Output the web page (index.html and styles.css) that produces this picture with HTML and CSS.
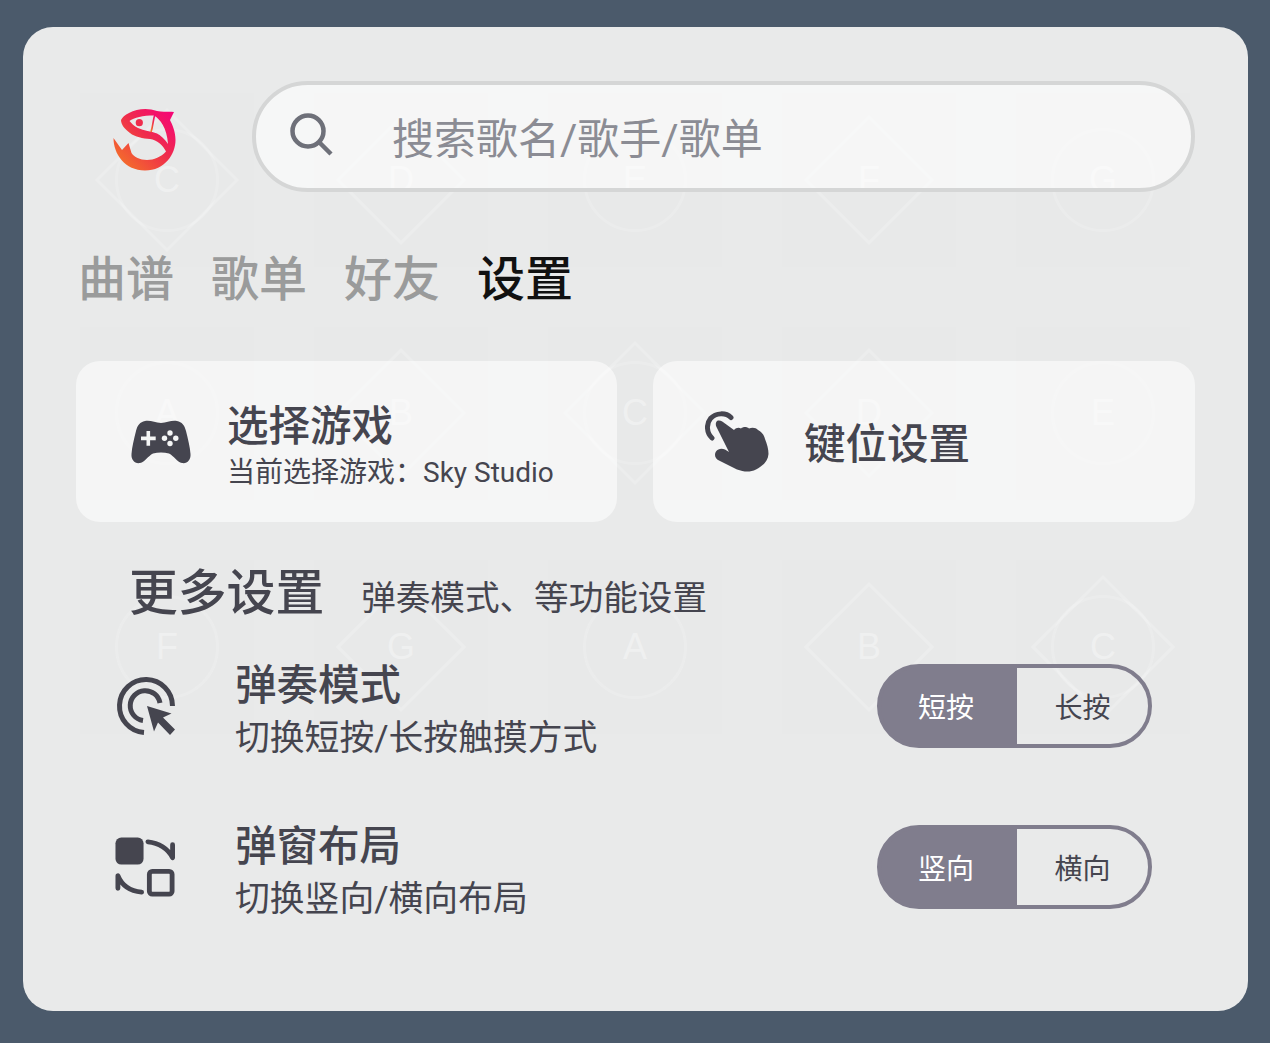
FILE: index.html
```html
<!DOCTYPE html>
<html lang="zh-CN">
<head>
    <meta charset="UTF-8">
    <meta name="viewport" content="width=device-width, initial-scale=1.0">
    <title>设置</title>
    <link rel="stylesheet" href="styles.css">
</head>
<body>
    <div class="panel">
        <!-- Faint keyboard behind the content -->
        <div class="ghost-keys">
            <div class="key both">C</div>
            <div class="key diamond">D</div>
            <div class="key circle">E</div>
            <div class="key diamond">F</div>
            <div class="key circle">G</div>
            <div class="key circle">A</div>
            <div class="key diamond">B</div>
            <div class="key both">C</div>
            <div class="key diamond">D</div>
            <div class="key circle">E</div>
            <div class="key circle">F</div>
            <div class="key diamond">G</div>
            <div class="key circle">A</div>
            <div class="key diamond">B</div>
            <div class="key both">C</div>
        </div>

        <div class="content">
            <!-- Header -->
            <div class="header">
                <svg class="logo" viewBox="0 0 64 64">
                    <defs>
                        <linearGradient id="fish" x1="0" y1="1" x2="1" y2="0">
                            <stop offset="0.1" stop-color="#f4702a"/>
                            <stop offset="0.55" stop-color="#ef2c4c"/>
                            <stop offset="1" stop-color="#f6007c"/>
                        </linearGradient>
                    </defs>
                    <path fill="url(#fish)" fill-rule="evenodd" d="M61 4C55 3 50 4.500 44 3C35 -0.500 24 0.500 16 5C12 7 9 9.500 8 12C8 17 12 21 17 25C22 29 30 30.500 37 31C44 32 50 37 53 43.500C48 49 41 52 34 52C27 52 21 49 18.500 45L15.500 35L9 42L0.500 30C0.500 46 12 62.500 32 62.500C52 62.500 62.500 46 62.500 32C62.500 23 59 16 57 12ZM16.500 13C21 9.500 30 7.500 41 7.500C47 11 54 20 55 36C52 31 47 27 44 25.500C38 23 31 23 25 20C21 18 18.500 15.500 16.500 13Z"/>
                    <path fill="none" stroke="url(#fish)" stroke-width="1.600" d="M42 6C40 12 40 18 38 24"/>
                    <circle cx="26.300" cy="14.700" r="3.600" fill="#ef2c4c"/>
                </svg>
                <div class="search-bar">
                    <svg class="search-icon" viewBox="0 0 44 44" fill="none" stroke="currentColor" stroke-width="4.500">
                        <circle cx="18" cy="18" r="15.500"/>
                        <path d="m29 29 12 12"/>
                    </svg>
                    <span class="search-text">搜索歌名/歌手/歌单</span>
                </div>
            </div>

            <!-- Tabs -->
            <nav class="tabs">
                <a href="#" class="tab">曲谱</a>
                <a href="#" class="tab">歌单</a>
                <a href="#" class="tab">好友</a>
                <a href="#" class="tab active">设置</a>
            </nav>

            <!-- Cards -->
            <div class="cards">
                <div class="card">
                    <svg class="card-icon game-icon" viewBox="0 0 60 44">
                        <path class="icon-fill" d="M14 1C20 0 24 3 30 3C36 3 40 0 46 1C51 2 53.500 5 55 11C57 19 59 27 59.500 34C60 40 56 44 51 43C46 42 43 36 38 33.500C33 32 27 32 22 33.500C17 36 14 42 9 43C4 44 0 40 0.500 34C1 27 3 19 5 11C6.500 5 9 2 14 1Z"/>
                        <path class="icon-cut" d="M15.500 11h3.600v5.600h5.600v3.600h-5.600v5.600h-3.600v-5.600H10v-3.600h5.500z"/>
                        <circle class="icon-cut" cx="39" cy="13" r="2.700"/>
                        <circle class="icon-cut" cx="33.500" cy="18.300" r="2.700"/>
                        <circle class="icon-cut" cx="44.800" cy="18.300" r="2.700"/>
                        <circle class="icon-cut" cx="39" cy="23.500" r="2.700"/>
                    </svg>
                    <div class="card-text">
                        <div class="card-title">选择游戏</div>
                        <div class="card-sub">当前选择游戏：Sky Studio</div>
                    </div>
                </div>
                <div class="card">
                    <svg class="card-icon hand-icon" viewBox="0 0 64 62">
                        <path class="icon-line" d="M26 6.500C21 1.500 11 1.500 5.500 7.500C1 13 1.500 22 7 27"/>
                        <path class="icon-fill" d="M12 10C15 8.500 18 11 20 12.500L29 19C31 16.500 34 16 36 17.500C38 15.500 42 15.500 44 17.500C47 16 51 16.500 53 19C57 21 59 24 60 28C62 33 63.500 38 63.500 43C63 50 58 55 51 58.500C45 61.500 39 61 32 58.500L14 49.500C10 47.500 9 43.500 11 40.500C13 37.500 17 37 20 38.500L24 41L19 31L11.500 16C10.500 14 10.500 11.500 12 10Z"/>
                    </svg>
                    <div class="card-title single">键位设置</div>
                </div>
            </div>

            <!-- More settings -->
            <div class="more-head">
                <h2 class="more-title">更多设置</h2>
                <span class="more-sub">弹奏模式、等功能设置</span>
            </div>

            <div class="setting-row">
                <svg class="setting-icon" viewBox="0 0 60 60">
                    <path class="icon-line butt" d="M56.500 30A26.500 26.500 0 1 0 28 56.500"/>
                    <path class="icon-line butt" d="M44 27A15 15 0 1 0 27 44.500"/>
                    <path class="icon-fill" d="M31 30L55.500 37.500L47 41.500L59 53.500L54 59L42 46.500L38 55.500Z"/>
                </svg>
                <div class="setting-text">
                    <div class="setting-title">弹奏模式</div>
                    <div class="setting-sub">切换短按/长按触摸方式</div>
                </div>
                <div class="toggle">
                    <span class="toggle-item on">短按</span>
                    <span class="toggle-item">长按</span>
                </div>
            </div>

            <div class="setting-row">
                <svg class="setting-icon wide" viewBox="0 0 62 62">
                    <rect class="icon-fill" x="0.500" y="0.500" width="29" height="28" rx="6"/>
                    <rect class="icon-line" x="35.500" y="35.500" width="23.500" height="23.500" rx="3"/>
                    <path class="icon-line" d="M34 5C45 6 55 12 59.500 21.500V8"/>
                    <path class="icon-line" d="M27.500 57C16 56 7 50 3 40V53"/>
                </svg>
                <div class="setting-text">
                    <div class="setting-title">弹窗布局</div>
                    <div class="setting-sub">切换竖向/横向布局</div>
                </div>
                <div class="toggle">
                    <span class="toggle-item on">竖向</span>
                    <span class="toggle-item">横向</span>
                </div>
            </div>
        </div>
    </div>
</body>
</html>
```

FILE: styles.css
```css
* {
    margin: 0;
    padding: 0;
    box-sizing: border-box;
}

body {
    font-family: Roboto, "Noto Sans CJK SC", sans-serif;
    background-color: #4b5a6b;
    color: #45454f;
    padding: 27px 22px 32px 23px;
}

.panel {
    position: relative;
    height: 984px;
    background: #e9eaea;
    border-radius: 30px;
    overflow: hidden;
}

/* Ghost keys */
.ghost-keys {
    position: absolute;
    left: 27px;
    top: 36px;
    display: grid;
    grid-template-columns: repeat(5, 234px);
    grid-auto-rows: 233.500px;
}

.key {
    position: relative;
    display: flex;
    align-items: center;
    justify-content: center;
    padding: 30px;
    background: rgba(0,0,0,0.004) content-box;
    font-family: "Liberation Sans", sans-serif;
    font-size: 36px;
    color: rgba(255,255,255,0.35);
}

.key::before,
.key::after {
    content: '';
    position: absolute;
    left: 50%;
    top: 50%;
    box-sizing: border-box;
}

.diamond::before,
.both::before {
    width: 92px;
    height: 92px;
    margin: -46px 0 0 -46px;
    border: 3px solid rgba(255,255,255,0.2);
    transform: rotate(45deg);
}

.both::before {
    width: 102px;
    height: 102px;
    margin: -51px 0 0 -51px;
}

.circle::after,
.both::after {
    width: 104px;
    height: 104px;
    margin: -52px 0 0 -52px;
    border: 3px solid rgba(255,255,255,0.16);
    border-radius: 50%;
}

/* Content */
.content {
    position: relative;
    padding: 54px 53px 0;
}

.header {
    display: flex;
    align-items: center;
}

.logo {
    width: 64px;
    height: 64px;
    margin: 7px 75px 0 37px;
    flex-shrink: 0;
}

.search-bar {
    flex: 1;
    height: 111px;
    display: flex;
    align-items: center;
    padding-left: 34px;
    background: rgba(255,255,255,0.6);
    border: 4px solid #d5d6d6;
    border-radius: 56px;
}

.search-icon {
    width: 44px;
    height: 44px;
    color: #6e7079;
    margin: 0 58px 4px 0;
}

.search-text {
    font-size: 42px;
    color: #8b8c94;
    line-height: 1;
    margin-top: 6px;
}

.tabs {
    display: flex;
    gap: 37px;
    margin-top: 55px;
    padding-left: 2px;
}

.tab {
    font-size: 48px;
    font-weight: 500;
    line-height: 66px;
    color: #9a9b9b;
    text-decoration: none;
}

.tab.active {
    color: #111;
}

.cards {
    display: grid;
    grid-template-columns: 541px 542px;
    gap: 36px;
    margin-top: 48px;
}

.card {
    height: 161px;
    display: flex;
    align-items: center;
    background: rgba(255,255,255,0.55);
    border-radius: 24px;
}

.card-icon {
    flex-shrink: 0;
}

.game-icon {
    width: 60px;
    height: 44px;
    margin: 0 36px 0 55px;
}

.hand-icon {
    width: 64px;
    height: 62px;
    margin: 0 35px 0 52px;
}

.icon-fill {
    fill: #45454f;
}

.icon-cut {
    fill: #f5f6f6;
}

.icon-line {
    fill: none;
    stroke: #45454f;
    stroke-width: 5;
    stroke-linecap: round;
    stroke-linejoin: round;
}

.icon-line.butt {
    stroke-linecap: butt;
}

.card-text {
    margin-top: 11px;
}

.card-title {
    font-size: 41.500px;
    font-weight: 500;
    line-height: 50px;
}

.card-title.single {
    margin-top: 6px;
}

.card-sub {
    font-size: 28px;
    line-height: 40px;
    margin-top: 1px;
}

.more-head {
    display: flex;
    align-items: baseline;
    margin-top: 37px;
    padding-left: 53px;
}

.more-title {
    font-size: 48.800px;
    font-weight: 500;
    line-height: 70px;
    margin-right: 37px;
}

.more-sub {
    font-size: 34.600px;
}

.setting-row {
    display: flex;
    align-items: center;
    height: 101px;
    margin-bottom: 60px;
    padding: 0 43px 0 40px;
}

.more-head + .setting-row {
    margin-top: 31px;
}

.setting-icon {
    width: 60px;
    height: 60px;
    margin: 0 59px 10px 0;
    flex-shrink: 0;
}

.setting-icon.wide {
    width: 62px;
    margin-left: -2px;
}

.setting-text {
    flex: 1;
    margin-top: 3px;
}

.setting-title {
    font-size: 41.500px;
    font-weight: 500;
    line-height: 50px;
}

.setting-sub {
    font-size: 34.800px;
    line-height: 50px;
    margin-top: 2px;
}

.toggle {
    width: 275px;
    height: 84px;
    margin-bottom: 10px;
    display: grid;
    grid-template-columns: 136px 1fr;
    background: linear-gradient(90deg, #807d8d 136px, transparent 136px);
    border: 4px solid #807d8d;
    border-radius: 42px;
}

.toggle-item {
    display: flex;
    align-items: center;
    justify-content: center;
    font-size: 28px;
    color: #45454f;
}

.toggle-item.on {
    padding-right: 6px;
    color: #fff;
}
```
